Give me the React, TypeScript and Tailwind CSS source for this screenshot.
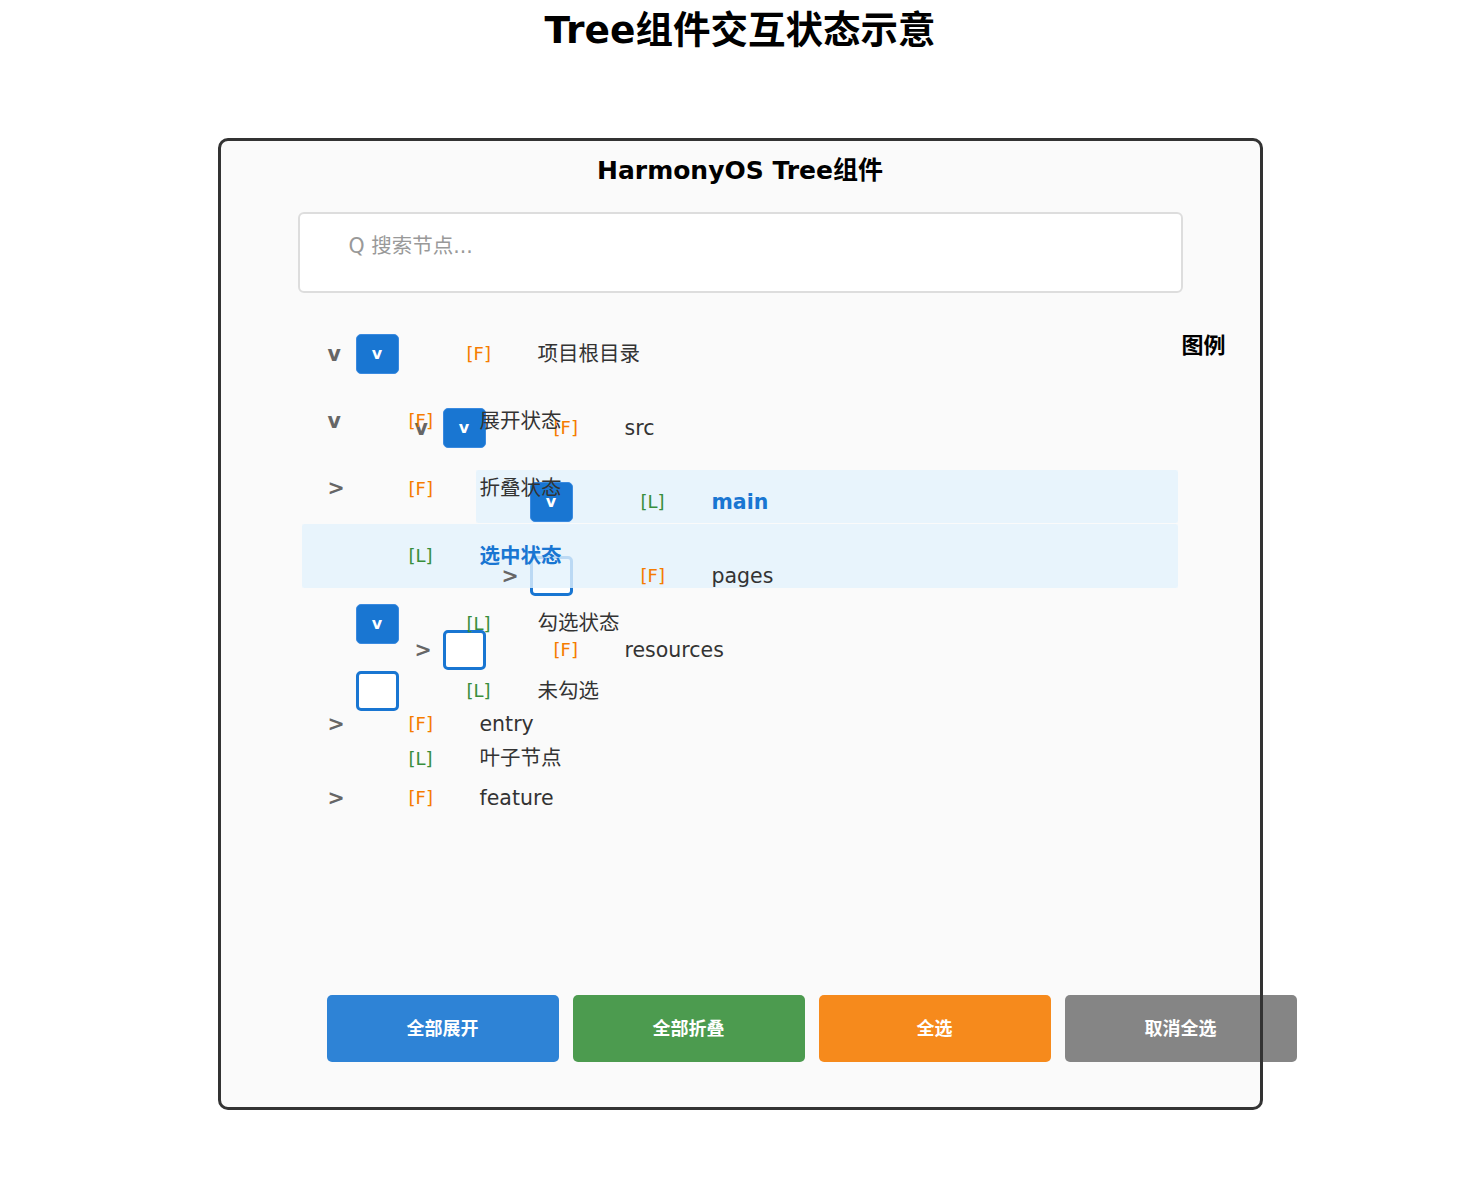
type Kind = 'F' | 'L';

type Node = {
  level: number;
  chevron?: 'v' | '>';
  check?: 'on' | 'off';
  kind: Kind;
  label: string;
  selected?: boolean;
};

const treeNodes: Node[] = [
  { level: 0, chevron: 'v', check: 'on', kind: 'F', label: '项目根目录' },
  { level: 1, chevron: 'v', check: 'on', kind: 'F', label: 'src' },
  { level: 2, check: 'on', kind: 'L', label: 'main', selected: true },
  { level: 2, chevron: '>', check: 'off', kind: 'F', label: 'pages' },
  { level: 1, chevron: '>', check: 'off', kind: 'F', label: 'resources' },
  { level: 0, chevron: '>', kind: 'F', label: 'entry' },
  { level: 0, chevron: '>', kind: 'F', label: 'feature' },
];

const legendNodes: Node[] = [
  { level: 0, chevron: 'v', kind: 'F', label: '展开状态' },
  { level: 0, chevron: '>', kind: 'F', label: '折叠状态' },
  { level: 0, kind: 'L', label: '选中状态', selected: true },
  { level: 0, check: 'on', kind: 'L', label: '勾选状态' },
  { level: 0, check: 'off', kind: 'L', label: '未勾选' },
  { level: 0, kind: 'L', label: '叶子节点' },
];

const buttons = [
  { label: '全部展开', color: 'bg-[#2e83d6]' },
  { label: '全部折叠', color: 'bg-[#4c9b4f]' },
  { label: '全选', color: 'bg-[#f68a1c]' },
  { label: '取消全选', color: 'bg-[#858585]' },
];

function Checkbox({ state }: { state: 'on' | 'off' }) {
  if (state === 'on') {
    return (
      <span className="mr-[15px] flex h-[40px] w-[43px] shrink-0 items-center justify-center rounded-[5px] border border-[#3a8ae0] bg-[#1976d2] text-[16px] leading-none font-bold text-white">
        v
      </span>
    );
  }
  return <span className="mr-[15px] h-[40px] w-[43px] shrink-0 rounded-[5px] border-[3px] border-[#1976d2] bg-white" />;
}

function NodeContent({ node }: { node: Node }) {
  return (
    <>
      <span className="relative z-20 w-[28px] shrink-0 text-[20.5px] leading-none font-bold text-[#666]">
        {node.chevron}
      </span>
      {node.check && <Checkbox state={node.check} />}
      <span className="w-[53px] shrink-0" />
      <span
        className={`relative z-20 w-[71px] shrink-0 text-[18px] leading-none ${
          node.kind === 'F' ? 'text-[#f57c00]' : 'text-[#388e3c]'
        }`}
      >
        [{node.kind}]
      </span>
      <span
        className={`relative z-20 text-[20.5px] leading-none whitespace-nowrap ${
          node.selected ? 'font-bold text-[#1976d2]' : 'text-[#333]'
        }`}
      >
        {node.label}
      </span>
    </>
  );
}

function TreeRow({ node }: { node: Node }) {
  return (
    <div className="h-[74px] pt-[5px]" style={{ paddingLeft: node.level * 87 }}>
      <div
        className={`flex h-[53px] items-center rounded-[2px] pt-[11px] pl-[26px] ${
          node.selected ? 'bg-[#e3f2fd]/80' : ''
        }`}
      >
        <NodeContent node={node} />
      </div>
    </div>
  );
}

function LegendRow({ node }: { node: Node }) {
  return (
    <div className="flex h-[67.5px] items-center">
      <div
        className={`flex h-[64px] w-full items-center rounded-[2px] pl-[26px] ${
          node.selected ? 'relative z-10 bg-[#e3f2fd]/80' : ''
        }`}
      >
        <NodeContent node={node} />
      </div>
    </div>
  );
}

export default function App() {
  return (
    <div className="min-h-[1179px] bg-white font-['DejaVu_Sans','Noto_Sans_CJK_SC',sans-serif] text-black">
      <h1 className="flex h-[62px] items-center justify-center text-[37.5px] leading-none font-bold">
        Tree组件交互状态示意
      </h1>

      <div className="relative mx-auto mt-[76px] flex h-[972px] w-[1045px] flex-col rounded-[10px] bg-[#fafafa] p-[3px]">
        <div className="flex h-[58px] items-center justify-center text-[25px] leading-none font-bold">
          HarmonyOS Tree组件
        </div>

        <div className="mt-[13px] ml-[77px] h-[81px] w-[885px] rounded-[6px] border-2 border-[#ddd] bg-white pt-[20px] pl-[49px]">
          <span className="text-[20.5px] leading-[24px] text-[#999]">Q 搜索节点...</span>
        </div>

        <div className="mt-[24px] grid">
          <div className="col-start-1 row-start-1 ml-[81px] w-[876px]">
            {treeNodes.map((n) => (
              <TreeRow key={n.label} node={n} />
            ))}
          </div>

          <div className="col-start-1 row-start-1 flex flex-col">
            <div className="flex h-[58px] items-center justify-end pr-[34px] text-[22px] leading-none font-bold">
              图例
            </div>
            <div className="mt-[12.25px] ml-[81px] w-[876px]">
              {legendNodes.map((n) => (
                <LegendRow key={n.label} node={n} />
              ))}
            </div>
          </div>
        </div>

        <div className="mt-auto mb-[45px] ml-[106px] flex gap-[14px]">
          {buttons.map((b) => (
            <button
              key={b.label}
              className={`flex h-[67px] w-[232px] shrink-0 items-center justify-center rounded-[5px] text-[18px] font-bold text-white ${b.color}`}
            >
              {b.label}
            </button>
          ))}
        </div>

        {/* frame drawn last so it sits over the overflowing button */}
        <div className="pointer-events-none absolute inset-0 z-30 rounded-[10px] border-[3px] border-[#333]" />
      </div>
    </div>
  );
}
